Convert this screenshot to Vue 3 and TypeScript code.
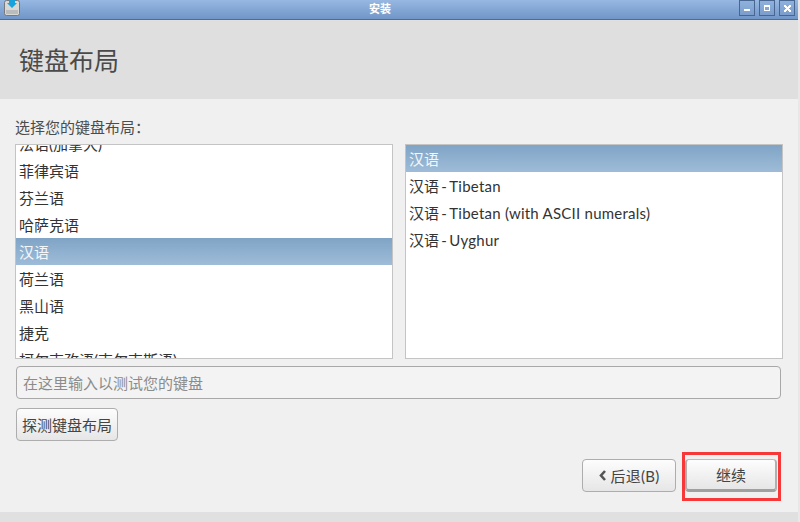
<script setup lang="ts">
const leftRows: { label: string; selected?: boolean }[] = [
  { label: '法语(加拿大)' },
  { label: '菲律宾语' },
  { label: '芬兰语' },
  { label: '哈萨克语' },
  { label: '汉语', selected: true },
  { label: '荷兰语' },
  { label: '黑山语' },
  { label: '捷克' },
  { label: '柯尔克孜语(吉尔吉斯语)' },
]
const rightRows: { label: string; variant?: string; selected?: boolean }[] = [
  { label: '汉语', selected: true },
  { label: '汉语', variant: 'Tibetan' },
  { label: '汉语', variant: 'Tibetan (with ASCII numerals)' },
  { label: '汉语', variant: 'Uyghur' },
]
</script>

<template>
  <div class="window">
    <div class="titlebar">
      <svg class="appicon" width="16" height="16" viewBox="0 0 16 16">
        <rect x="0.5" y="0.5" width="15" height="15" rx="2" fill="#d8d8d4" stroke="#77797c" />
        <rect x="2" y="10" width="12" height="4" fill="#b9bcbc" />
        <path d="M5 0h6v3h2l-5 5-5-5h2z" fill="#19a3dc" />
      </svg>
      <span class="title">安装</span>
      <div class="winbtns">
        <span class="winbtn"><i class="min"></i></span>
        <span class="winbtn"><i class="max"></i></span>
        <span class="winbtn">
          <svg width="7" height="7" viewBox="0 0 7 7"><path d="M0 0h2v1h1v1h1V1h1V0h2v2H6v1H5v1h1v1h1v2H5V6H4V5H3v1H2v1H0V5h1V4h1V3H1V2H0z" fill="#fff" /></svg>
        </span>
      </div>
    </div>
    <header class="head"><h1>键盘布局</h1></header>
    <main class="body">
      <div class="prompt">选择您的键盘布局：</div>
      <div class="lists">
        <div class="list">
          <div class="scrolled">
            <div v-for="r in leftRows" :key="r.label" class="row" :class="{ sel: r.selected }">{{ r.label }}</div>
          </div>
        </div>
        <div class="list">
          <div v-for="r in rightRows" :key="r.label + r.variant" class="row" :class="{ sel: r.selected }">
            {{ r.label }}<template v-if="r.variant"><span class="sep"> - </span><span class="variant">{{ r.variant }}</span></template>
          </div>
        </div>
      </div>
      <input class="test" placeholder="在这里输入以测试您的键盘" />
      <button class="btn detect">探测键盘布局</button>
      <div class="actions">
        <button class="btn back">
          <svg width="9" height="11" viewBox="0 0 9 11"><path d="M7 1 3 5.5 7 10" fill="none" stroke="#555" stroke-width="2.6" /></svg>
          <span class="backlabel">后退(B)</span>
        </button>
        <div class="highlight">
          <button class="btn next">继续</button>
        </div>
      </div>
    </main>
    <div class="foot"></div>
  </div>
</template>

<style>
html, body { margin: 0; background: #f0f0f0; }
</style>

<style scoped>
.window {
  width: 798px;
  height: 522px;
  display: flex;
  flex-direction: column;
  font-family: Lato, "Noto Sans CJK SC", sans-serif;
  color: #3c3c3c;
  overflow: hidden;
  border-right: 2px solid #e8e8e8;
}
.titlebar {
  height: 19px;
  flex: none;
  display: flex;
  align-items: flex-start;
  justify-content: center;
  position: relative;
  background: linear-gradient(#96b8e2, #7096c8);
  border-bottom: 1px solid #4d6e9b;
  padding-right: 38px;
}
.appicon { position: absolute; left: 4px; top: 0; }
.title {
  font-size: 11px;
  line-height: 17px;
  color: #fff;
  font-weight: 700;
}
.winbtns {
  position: absolute;
  right: 3px;
  top: 0;
  display: flex;
  gap: 4px;
}
.winbtn {
  width: 14px;
  height: 14px;
  border: 1px solid #48668f;
  background: linear-gradient(#8fb1dc, #7a9dcd);
  display: flex;
  align-items: center;
  justify-content: center;
}
.min { width: 6px; height: 2px; background: #fff; margin-top: 3px; }
.max { width: 4px; height: 3px; border: 1px solid #fff; border-top-width: 2px; }
.head {
  height: 79px;
  flex: none;
  box-sizing: border-box;
  background: #dfdfdf;
  display: flex;
  align-items: center;
  padding: 2px 0 0 19px;
}
.head h1 {
  margin: 0;
  font-size: 25px;
  font-weight: 400;
  color: #4a4a4a;
  line-height: 1;
}
.body {
  flex: 1;
  background: #f0f0f0;
  padding: 19px 15px 0 15px;
  display: flex;
  flex-direction: column;
  min-height: 0;
}
.prompt { font-size: 15px; line-height: 18px; margin-bottom: 8px; color: #4c4c4c; }
.lists { display: flex; gap: 12px; }
.list {
  width: 378px;
  height: 215px;
  box-sizing: border-box;
  background: #fff;
  border: 1px solid #c4c4c4;
  overflow: hidden;
}
.scrolled { margin-top: -15px; }
.row {
  box-sizing: border-box;
  height: 27px;
  line-height: 27px;
  padding: 1px 0 0 3px;
  font-size: 15px;
  color: #333;
  white-space: pre;
}
.sep { word-spacing: -1.5px; }
.variant { letter-spacing: 0.24px; }
.row.sel {
  color: #f3f6fa;
  background: linear-gradient(#80a4c6, #9ebcd8);
}
.test {
  display: block;
  box-sizing: border-box;
  margin: 7px 0 0 1px;
  width: 765px;
  height: 33px;
  padding: 0 6px;
  border: 1px solid #a8a8a8;
  border-radius: 4px;
  background: #f3f3f3;
  font: 15px Lato, "Noto Sans CJK SC", sans-serif;
  outline: none;
}
.test::placeholder { color: #8b8b8b; opacity: 1; }
.btn {
  box-sizing: border-box;
  font: 15px Lato, "Noto Sans CJK SC", sans-serif;
  color: #444;
  border: 1px solid #adadad;
  border-radius: 4px;
  background: linear-gradient(#fdfdfd, #e6e6e6);
  padding: 0;
}
.detect {
  margin: 9px 0 0 1px;
  width: 102px;
  height: 33px;
  flex: none;
}
.actions {
  display: flex;
  justify-content: flex-end;
  align-items: flex-start;
  margin-top: 11px;
  gap: 6px;
  margin-right: 2px;
}
.back {
  margin-top: 7px;
  width: 94px;
  height: 33px;
  display: flex;
  align-items: center;
  justify-content: center;
  gap: 3px;
}
.backlabel { letter-spacing: 0.3px; }
.highlight {
  width: 99px;
  height: 49px;
  box-sizing: border-box;
  border: 3px solid #f83838;
  padding: 4px 0 0 0;
}
.next {
  display: block;
  width: 92px;
  height: 33px;
  border: 2px solid #a9a9a9;
  border-top-width: 1px;
  border-bottom-width: 3px;
  border-color: #bdbdbd #b0b0b0 #a0a0a0;
}
.foot { height: 10px; flex: none; background: #e0e0e0; }
</style>
